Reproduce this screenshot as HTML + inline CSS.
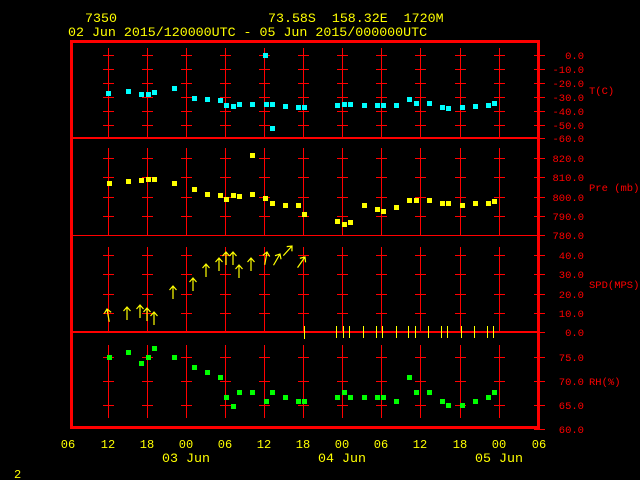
<!DOCTYPE html>
<html><head><meta charset="utf-8"><style>
html,body{margin:0;padding:0;background:#000;width:640px;height:480px;overflow:hidden}
svg{display:block}
text{font-family:"Liberation Mono","DejaVu Sans Mono",monospace}
</style></head><body>
<svg width="640" height="480" viewBox="0 0 640 480" xmlns="http://www.w3.org/2000/svg">
<defs>
<symbol id="c" overflow="visible"><path stroke="#f00" stroke-width="1" fill="none" d="M0.5 48V138M0.5 148V235M0.5 247V332M0.5 345V418M-5 55.5H6M-5 69.5H6M-5 83.5H6M-5 97.5H6M-5 111.5H6M-5 125.5H6M-5 158.5H6M-5 177.5H6M-5 197.5H6M-5 216.5H6M-5 255.5H6M-5 274.5H6M-5 294.5H6M-5 313.5H6M-5 357.5H6M-5 381.5H6M-5 405.5H6"/></symbol>
<symbol id="a" overflow="visible"><path stroke="#ff0" stroke-width="1.2" fill="none" d="M0 0V13M-3.5 4L0 0L3.5 4"/></symbol>
</defs>
<g fill="#ff0" font-size="13.3">
<text x="85" y="22">7350</text>
<text x="268" y="22" xml:space="preserve">73.58S  158.32E  1720M</text>
<text x="68" y="36">02 Jun 2015/120000UTC - 05 Jun 2015/000000UTC</text>
</g>
<use href="#c" x="108"/><use href="#c" x="147"/><use href="#c" x="186"/><use href="#c" x="225"/><use href="#c" x="264"/><use href="#c" x="303"/><use href="#c" x="342"/><use href="#c" x="381"/><use href="#c" x="420"/><use href="#c" x="460"/><use href="#c" x="499"/>
<path stroke="#f00" fill="none" stroke-width="2" d="M72 138H538M72 332H538"/>
<path stroke="#f00" fill="none" stroke-width="1" d="M72 235.5H538"/>
<rect x="71.5" y="41.5" width="467" height="386" fill="none" stroke="#f00" stroke-width="3"/>
<path stroke="#f00" stroke-width="1" d="M534 55.5H545M534 69.5H545M534 83.5H545M534 97.5H545M534 111.5H545M534 125.5H545M534 138.5H545M534 158.5H545M534 177.5H545M534 197.5H545M534 216.5H545M534 235.5H545M534 255.5H545M534 274.5H545M534 294.5H545M534 313.5H545M534 332.5H545M534 357.5H545M534 381.5H545M534 405.5H545M534 429.5H545"/>
<g fill="#f00" font-size="10.5" text-anchor="end">
<text x="584" y="59">0.0</text><text x="584" y="73">-10.0</text><text x="584" y="87">-20.0</text><text x="584" y="101">-30.0</text><text x="584" y="115">-40.0</text><text x="584" y="129">-50.0</text><text x="584" y="142">-60.0</text>
<text x="584" y="162">820.0</text><text x="584" y="181">810.0</text><text x="584" y="201">800.0</text><text x="584" y="220">790.0</text><text x="584" y="239">780.0</text>
<text x="584" y="259">40.0</text><text x="584" y="278">30.0</text><text x="584" y="298">20.0</text><text x="584" y="317">10.0</text><text x="584" y="336">0.0</text>
<text x="584" y="361">75.0</text><text x="584" y="385">70.0</text><text x="584" y="409">65.0</text><text x="584" y="433">60.0</text>
</g>
<g fill="#f00" font-size="10.5">
<text x="589" y="94">T(C)</text><text x="589" y="191">Pre (mb)</text><text x="589" y="288">SPD(MPS)</text><text x="589" y="385">RH(%)</text>
</g>
<g fill="#ff0" font-size="12" text-anchor="middle">
<text x="68" y="448">06</text><text x="108" y="448">12</text><text x="147" y="448">18</text><text x="186" y="448">00</text><text x="225" y="448">06</text><text x="264" y="448">12</text><text x="303" y="448">18</text><text x="342" y="448">00</text><text x="381" y="448">06</text><text x="420" y="448">12</text><text x="460" y="448">18</text><text x="499" y="448">00</text><text x="539" y="448">06</text>
</g>
<g fill="#ff0" font-size="13.3" text-anchor="middle">
<text x="186" y="462">03 Jun</text><text x="342" y="462">04 Jun</text><text x="499" y="462">05 Jun</text>
</g>
<text x="14" y="478" fill="#ff0" font-size="12">2</text>
<path fill="#0ff" d="M106 91h5v5h-5zM126 89h5v5h-5zM139 92h5v5h-5zM146 92h5v5h-5zM152 90h5v5h-5zM172 86h5v5h-5zM192 96h5v5h-5zM205 97h5v5h-5zM218 98h5v5h-5zM224 103h5v5h-5zM231 104h5v5h-5zM237 102h5v5h-5zM250 102h5v5h-5zM264 102h5v5h-5zM270 102h5v5h-5zM263 53h5v5h-5zM270 126h5v5h-5zM283 104h5v5h-5zM296 105h5v5h-5zM302 105h5v5h-5zM335 103h5v5h-5zM342 102h5v5h-5zM348 102h5v5h-5zM362 103h5v5h-5zM375 103h5v5h-5zM381 103h5v5h-5zM394 103h5v5h-5zM407 97h5v5h-5zM414 101h5v5h-5zM427 101h5v5h-5zM440 105h5v5h-5zM446 106h5v5h-5zM460 105h5v5h-5zM473 104h5v5h-5zM486 103h5v5h-5zM492 101h5v5h-5z"/>
<path fill="#ff0" d="M107 181h5v5h-5zM126 179h5v5h-5zM139 178h5v5h-5zM146 177h5v5h-5zM152 177h5v5h-5zM172 181h5v5h-5zM192 187h5v5h-5zM205 192h5v5h-5zM218 193h5v5h-5zM224 197h5v5h-5zM231 193h5v5h-5zM237 194h5v5h-5zM250 192h5v5h-5zM250 153h5v5h-5zM263 196h5v5h-5zM270 201h5v5h-5zM283 203h5v5h-5zM296 203h5v5h-5zM302 212h5v5h-5zM335 219h5v5h-5zM342 222h5v5h-5zM348 220h5v5h-5zM362 203h5v5h-5zM375 207h5v5h-5zM381 209h5v5h-5zM394 205h5v5h-5zM407 198h5v5h-5zM414 198h5v5h-5zM427 198h5v5h-5zM440 201h5v5h-5zM446 201h5v5h-5zM460 203h5v5h-5zM473 201h5v5h-5zM486 201h5v5h-5zM492 199h5v5h-5z"/>
<path fill="#0f0" d="M107 355h5v5h-5zM126 350h5v5h-5zM139 361h5v5h-5zM146 355h5v5h-5zM152 346h5v5h-5zM172 355h5v5h-5zM192 365h5v5h-5zM205 370h5v5h-5zM218 375h5v5h-5zM224 395h5v5h-5zM231 404h5v5h-5zM237 390h5v5h-5zM250 390h5v5h-5zM264 399h5v5h-5zM270 390h5v5h-5zM283 395h5v5h-5zM296 399h5v5h-5zM302 399h5v5h-5zM335 395h5v5h-5zM342 390h5v5h-5zM348 395h5v5h-5zM362 395h5v5h-5zM375 395h5v5h-5zM381 395h5v5h-5zM394 399h5v5h-5zM407 375h5v5h-5zM414 390h5v5h-5zM427 390h5v5h-5zM440 399h5v5h-5zM446 403h5v5h-5zM460 403h5v5h-5zM473 399h5v5h-5zM486 395h5v5h-5zM492 390h5v5h-5z"/>
<path stroke="#ff0" stroke-width="1" d="M304.5 326V339M336.5 326V338M343.5 326V338M349.5 326V338M363.5 326V338M376.5 326V338M382.5 326V338M396.5 326V338M408.5 326V338M415.5 326V338M428.5 326V338M441.5 326V338M447.5 326V338M461.5 326V338M474.5 326V338M487.5 326V338M493.5 326V338"/>
<g>
<use href="#a" transform="translate(107,309) rotate(-10)"/>
<use href="#a" transform="translate(127,307)"/>
<use href="#a" transform="translate(140,305)"/>
<use href="#a" transform="translate(147,308)"/>
<use href="#a" transform="translate(154,312)"/>
<use href="#a" transform="translate(173,286)"/>
<use href="#a" transform="translate(193,278)"/>
<use href="#a" transform="translate(206,264)"/>
<use href="#a" transform="translate(219,258)"/>
<use href="#a" transform="translate(226,252)"/>
<use href="#a" transform="translate(233,252)"/>
<use href="#a" transform="translate(239,265)"/>
<use href="#a" transform="translate(251,258)"/>
<use href="#a" transform="translate(267,252) rotate(10)"/>
<use href="#a" transform="translate(280,254) rotate(30)"/>
<use href="#a" transform="translate(292,246) rotate(42)"/>
<use href="#a" transform="translate(305,257) rotate(35)"/>
</g>
</svg>
</body></html>
